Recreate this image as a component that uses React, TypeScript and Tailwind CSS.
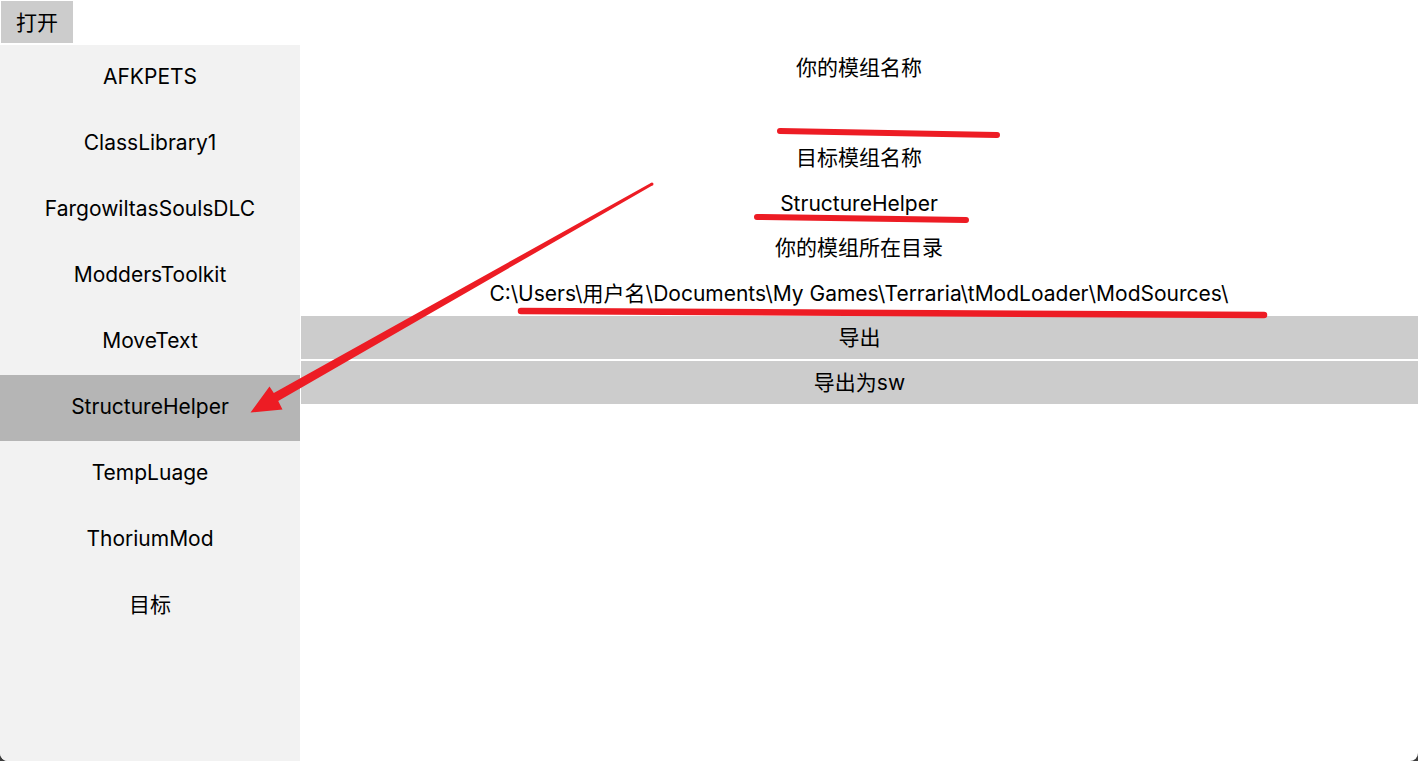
import React from "react";

const items = [
  "AFKPETS",
  "ClassLibrary1",
  "FargowiltasSoulsDLC",
  "ModdersToolkit",
  "MoveText",
  "StructureHelper",
  "TempLuage",
  "ThoriumMod",
  "目标",
];

const font = {
  fontFamily: '"Inter", "Noto Sans CJK SC", sans-serif',
};

export default function App() {
  return (
    <div className="w-[1418px] h-[761px] bg-[#3c3c3c] overflow-hidden">
      <div
        className="relative w-full h-full bg-white rounded-b-[8px] overflow-hidden flex text-black text-[21px]"
        style={font}
      >
        {/* Left column */}
        <div className="w-[300px] flex flex-col shrink-0">
          <div className="h-[45px] pl-[1px] pt-[1px]">
            <button className="w-[72px] h-[42px] bg-[#cccccc] flex items-center justify-center text-[21px] leading-none">
              打开
            </button>
          </div>
          <div className="flex-1 bg-[#f2f2f2] flex flex-col">
            {items.map((it) => (
              <div
                key={it}
                className={
                  "h-[66px] flex items-center justify-center pb-[2px] " +
                  (it === "StructureHelper" ? "bg-[#b5b5b5]" : "")
                }
              >
                {it}
              </div>
            ))}
          </div>
        </div>

        {/* Right column */}
        <div className="flex-1 flex flex-col pt-[46px]">
          <div className="h-[45px] flex items-center justify-center pb-[2px]">你的模组名称</div>
          <div className="h-[45px]" />
          <div className="h-[45px] flex items-center justify-center pb-[2px]">目标模组名称</div>
          <div className="h-[45px] flex items-center justify-center">StructureHelper</div>
          <div className="h-[45px] flex items-center justify-center pb-[2px]">你的模组所在目录</div>
          <div className="h-[45px] flex items-center justify-center">
            C:\Users\用户名\Documents\My Games\Terraria\tModLoader\ModSources\
          </div>
          <div className="pl-[1px] flex flex-col gap-[2px]">
            <button className="h-[43px] bg-[#cccccc] flex items-center justify-center">导出</button>
            <button className="h-[43px] bg-[#cccccc] flex items-center justify-center">导出为sw</button>
          </div>
        </div>

        {/* Red annotations overlay */}
        <svg
          className="absolute inset-0 pointer-events-none"
          width="1418"
          height="761"
          viewBox="0 0 1418 761"
        >
          <g stroke="#ed1c24" strokeLinecap="round" fill="none">
            <line x1="780" y1="131" x2="997" y2="135" strokeWidth="6" />
            <line x1="757" y1="217" x2="966" y2="220" strokeWidth="6" />
            <line x1="521" y1="311" x2="1264" y2="315" strokeWidth="6.5" />
          </g>
          <polygon
            fill="#ed1c24"
            points="652.7,185.3 278.2,400.9 282.5,409.5 250.5,412.5 269.5,386.5 273.8,393.1 651.3,182.7"
          />
          <circle cx="652" cy="184" r="1.5" fill="#ed1c24" />
        </svg>
      </div>
    </div>
  );
}
